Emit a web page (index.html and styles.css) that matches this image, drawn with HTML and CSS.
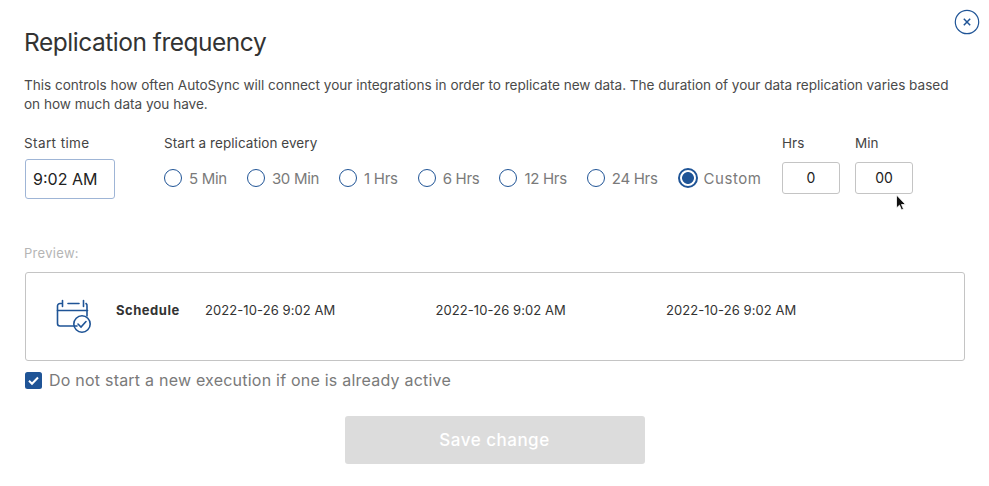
FILE: index.html
```html
<!DOCTYPE html>
<html lang="en">
<head>
<meta charset="utf-8">
<title>Replication frequency</title>
<link rel="stylesheet" href="styles.css">
</head>
<body>
<main class="dialog">
  <button class="close" aria-label="Close">
    <svg width="26" height="26" viewBox="0 0 26 26"><circle cx="13" cy="13" r="11.7" fill="none" stroke="#1f5496" stroke-width="1.2"/><path d="M9.8 9.8l6.4 6.4M16.2 9.8l-6.4 6.4" stroke="#1f5496" stroke-width="1.5" fill="none"/></svg>
  </button>
  <h1 class="title">Replication frequency</h1>
  <p class="desc">This controls how often AutoSync will connect your integrations in order to replicate new data. The duration of your data replication varies based on how much data you have.</p>
  <section class="controls">
    <div class="start">
      <div class="label">Start time</div>
      <div class="time">9:02 AM</div>
    </div>
    <div class="every">
      <div class="label">Start a replication every</div>
      <div class="radios">
        <span class="radio"><i class="dot"></i>5 Min</span>
        <span class="radio"><i class="dot"></i>30 Min</span>
        <span class="radio"><i class="dot"></i>1 Hrs</span>
        <span class="radio"><i class="dot"></i>6 Hrs</span>
        <span class="radio"><i class="dot"></i>12 Hrs</span>
        <span class="radio"><i class="dot"></i>24 Hrs</span>
        <span class="radio on"><i class="dot"></i>Custom</span>
      </div>
    </div>
    <div class="num">
      <div class="label">Hrs</div>
      <div class="box">0</div>
    </div>
    <div class="num">
      <div class="label">Min</div>
      <div class="box">00</div>
    </div>
    <svg class="cursor" width="12" height="18" viewBox="0 0 12 18"><path d="M1.5 1v13l3-2.800 2 4.800 2-.9-2-4.600h4z" fill="#111" stroke="#fff" stroke-width=".8"/></svg>
  </section>
  <div class="preview-label">Preview:</div>
  <section class="preview">
    <svg class="cal" width="36" height="34" viewBox="0 0 36 34" fill="none" stroke="#1f5496" stroke-width="1.6" stroke-linecap="round">
      <path d="M21 27H4a2.500 2.500 0 0 1-2.500-2.500V7A2.500 2.500 0 0 1 4 4.500h1.500M12 4.500h11M30 4.500h0a2.500 2.500 0 0 1 1 2.500v10"/>
      <path d="M6.500 1.500v6M27.500 1.500v6M1.500 11.500h30"/>
      <circle cx="26" cy="25" r="8.200"/>
      <path d="M22 25l3 3 5-5.500"/>
    </svg>
    <b class="sched">Schedule</b>
    <span class="date">2022-10-26 9:02 AM</span>
    <span class="date">2022-10-26 9:02 AM</span>
    <span class="date">2022-10-26 9:02 AM</span>
  </section>
  <label class="check">
    <svg width="17" height="17" viewBox="0 0 17 17"><rect width="17" height="17" rx="2.500" fill="#1f5496"/><path d="M4 8.800l3 3 6-6.300" stroke="#fff" stroke-width="2" fill="none"/></svg>
    Do not start a new execution if one is already active
  </label>
  <div class="actions"><button class="save">Save change</button></div>
</main>
</body>
</html>
```
FILE: styles.css
```css
* { box-sizing: border-box; }
html, body { margin: 0; height: 100%; background: #fff; }
body { font-family: Inter, "Open Sans", sans-serif; color: #333; overflow: hidden; }
.dialog { position: relative; padding: 27px 24px 0 24px; height: 486px; }
.close { position: absolute; top: 9px; left: 954px; width: 26px; height: 26px; padding: 0; border: 0; background: none; }
.close svg { display: block; }
.title { margin: 0; font-size: 24.5px; line-height: 30px; font-weight: 400; letter-spacing: -0.48px; color: #333; }
.desc { margin: 19px 0 0; font-size: 13.6px; line-height: 19px; letter-spacing: -0.03px; color: #4a4a4a; width: 930px; }
.controls { position: relative; display: flex; margin-top: 20px; height: 64px; }
.label { font-size: 13.5px; line-height: 18px; letter-spacing: 0.06px; color: #444; }
.start { width: 140px; }
.start .label { letter-spacing: 0.4px; }
.time { margin-top: 7px; margin-left: 1px; width: 90px; height: 40px; border: 1px solid #9fb5d6; border-radius: 3px; font-size: 16px; line-height: 38px; padding-left: 7px; color: #222; }
.every { width: 618px; }
.radios { display: flex; margin-top: 12px; height: 28px; align-items: center; gap: 20px; }
.radio { display: inline-flex; align-items: center; gap: 7px; font-size: 15px; letter-spacing: -0.3px; color: #7a7a7a; white-space: nowrap; }
.dot { display: block; width: 18px; height: 18px; border: 1.3px solid #1f5496; border-radius: 50%; }
.on { gap: 6px; letter-spacing: 0.55px; }
.on .dot { width: 20px; height: 20px; border: 2px solid #1f5496; background: radial-gradient(circle, #1f5496 0 5.500px, #fff 6.300px); }
.num { width: 73px; }
.box { margin-top: 10px; width: 58px; height: 32px; border: 1px solid #c4c4c4; border-radius: 3px; text-align: center; font-size: 14px; line-height: 30px; color: #222; }
.cursor { position: absolute; left: 871px; top: 60px; }
.preview-label { margin-top: 46px; font-size: 13px; line-height: 18px; color: #b5b5b5; letter-spacing: 0.3px; }
.preview { display: flex; align-items: flex-start; margin: 10px 0 0 1px; width: 940px; height: 89px; border: 1px solid #c4c4c4; border-radius: 3px; position: relative; padding-top: 28px; font-size: 13px; line-height: 18px; color: #333; }
.cal { position: absolute; left: 30px; top: 26px; }
.sched { margin-left: 90px; width: 89px; font-weight: 700; letter-spacing: 0.52px; }
.date { width: 230.500px; letter-spacing: 0.08px; }
.check { display: flex; align-items: center; gap: 7px; margin: 9px 0 0 1px; font-size: 16px; line-height: 20px; color: #7a7a7a; letter-spacing: 0.22px; }
.check svg { flex: none; }
.actions { display: flex; justify-content: center; margin-top: 26px; }
.save { width: 300px; height: 48px; border: 0; border-radius: 3px; background: #dcdcdc; color: #fff; font: 500 17px Inter, sans-serif; letter-spacing: 0.5px; }
```
